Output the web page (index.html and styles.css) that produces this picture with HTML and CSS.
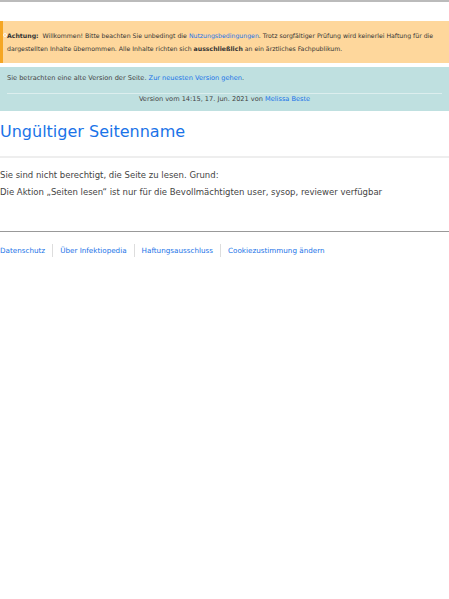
FILE: index.html
```html
<!DOCTYPE html>
<html lang="de">
<head>
  <meta charset="UTF-8" />
  <meta name="viewport" content="width=device-width, initial-scale=1.0" />
  <title>Ungültiger Seitenname – Infektiopedia</title>
  <link rel="stylesheet" href="styles.css">
</head>
<body>

<div class="topbar"></div>

<div class="notice warn">
  <span class="notice-icon"></span>
  <p><strong>Achtung:</strong>&nbsp; Willkommen! Bitte beachten Sie unbedingt die <a href="#">Nutzungsbedingungen</a>. Trotz sorgfältiger Prüfung wird keinerlei Haftung für die dargestellten Inhalte übernommen. Alle Inhalte richten sich <strong>ausschließlich</strong> an ein ärztliches Fachpublikum.</p>
</div>

<div class="notice old">
  <p>Sie betrachten eine alte Version der Seite. <a href="#">Zur neuesten Version gehen</a>.</p>
  <hr>
  <p class="rev">Version vom 14:15, 17. Jun. 2021 von <a href="#">Melissa Beste</a></p>
</div>

<h1 class="title">Ungültiger Seitenname</h1>

<div class="content">
  <p>Sie sind nicht berechtigt, die Seite zu lesen. Grund:</p>
  <p>Die Aktion „Seiten lesen“ ist nur für die Bevollmächtigten user, sysop, reviewer verfügbar</p>
</div>

<footer class="footer">
  <a href="#">Datenschutz</a>
  <a href="#">Über Infektiopedia</a>
  <a href="#">Haftungsausschluss</a>
  <a href="#">Cookiezustimmung ändern</a>
</footer>

</body>
</html>
```

FILE: styles.css
```css
body {
  font-family: "DejaVu Sans", sans-serif;
  color: #333;
  margin: 0;
  background: #fff;
}
a { color: #1a73e8; text-decoration: none; }
p { margin: 0; }

.topbar {
  height: 2px;
  background: #bbb;
  margin-bottom: 19px;
}

/* hinweisboxen oben */
.notice.warn {
  position: relative;
  background: #fed79c;
  border-left: 3px solid #f5a623;
  padding: 8px 6px 8px 4px;
  font-size: 6.2px;
  line-height: 13px;
}
.notice-icon {
  position: absolute;
  left: 0;
  top: 12px;
  width: 2px;
  height: 2px;
  border: 1px solid rgba(255,255,255,0.8);
  border-radius: 50%;
}
.notice.old {
  background: #bfe0e0;
  border-top: 4px solid #fff;
  padding: 5px 7px 7px 7px;
  font-size: 6.6px;
  line-height: 13px;
  color: #444;
}
.notice.old hr {
  border: 0;
  border-top: 1px solid #dceeee;
  margin: 8px 0 0;
}
.notice.old .rev {
  text-align: center;
  line-height: 10px;
}

.title {
  font-size: 16px;
  line-height: 19px;
  font-weight: normal;
  color: #1a73e8;
  margin: 0;
  padding: 11px 0 15px;
  border-bottom: 2px solid #eee;
}

.content {
  font-size: 8.5px;
  color: #444;
  line-height: 17px;
  padding: 9px 0 30px;
  border-bottom: 1px solid #999;
}

.footer {
  display: flex;
  font-size: 7.2px;
  padding: 12px 0;
}
.footer a {
  padding: 0 7px;
  border-left: 1px solid #ddd;
  line-height: 13px;
}
.footer a:first-child { padding-left: 0; border-left: 0; }
```
